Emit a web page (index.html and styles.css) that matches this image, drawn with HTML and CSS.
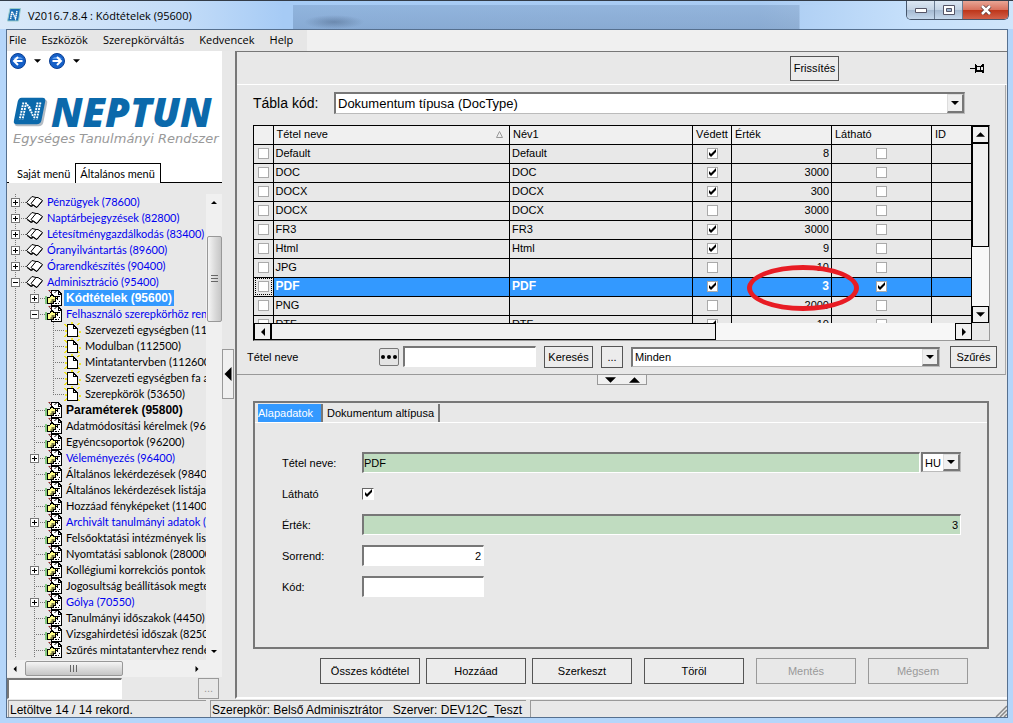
FILE: index.html
```
<!DOCTYPE html>
<html lang="hu">
<head>
    <meta charset="UTF-8">
    <title>V2016.7.8.4 : Kódtételek (95600)</title>
    <link rel="stylesheet" href="styles.css">
</head>
<body>
<svg class="symbols" aria-hidden="true">
    <symbol id="book" viewBox="0 0 17 16">
        <path d="M0.500 8.500L6 2.500L10 3.500L12 3.500L16.500 6.500L11 13.500L7.500 11L5 12Z" fill="#fff" stroke="#000"/>
        <path d="M10 3.500L5 9.500L7.500 11.500M1 9.500L5 12.500L7.500 11.500L10.500 13.500L16 7.500" fill="none" stroke="#000"/>
    </symbol>
    <symbol id="hand" viewBox="0 0 16 16">
        <path d="M5.500 0.500H12.500L15.500 3.500V15.500H5.500Z" fill="#fff" stroke="#000" shape-rendering="crispEdges"/>
        <path d="M12.500 0V4H16M12 6.500h2M11 9.500h1M13 11.500h1M9 13.500h2M12 13.500h1" fill="none" stroke="#000" shape-rendering="crispEdges"/>
        <path d="M1.500 7.500H4L6.500 4.500L8 6.500H11.500V8.500H9.500V11.500H8V13.500H2.500L1.500 12.500Z" fill="#ffff8c" stroke="#000" shape-rendering="crispEdges"/>
        <path d="M4 1.500L11 8.500M6 10h3M5 12h3M9 3L12 0" fill="none" stroke="#000"/>
        <path d="M0 6h1v8h-1z" fill="#18a818"/>
        <path d="M3 0h2v1h-2zM5 2h1v1h-1z" fill="#a02828"/>
    </symbol>
    <symbol id="page" viewBox="0 0 16 16" shape-rendering="crispEdges">
        <path d="M0 2l3 3M7 0v2M15 1l-2 2M0 9h2M14 10h2M0 15l3-3M15 15l-2-2" stroke="#f0e628" stroke-width="2"/>
        <path d="M2.500 2.500H8.500L12.500 6.500V14.500H2.500Z" fill="#fff" stroke="#000"/>
        <path d="M8.500 2.500V6.500H12.500" fill="none" stroke="#000"/>
    </symbol>
    <symbol id="plus" viewBox="0 0 9 9" shape-rendering="crispEdges">
        <path d="M0.500 0.500h8v8h-8z" fill="#fff" stroke="#777"/>
        <path d="M2 4.500h5M4.500 2v5" stroke="#000"/>
    </symbol>
    <symbol id="minus" viewBox="0 0 9 9" shape-rendering="crispEdges">
        <path d="M0.500 0.500h8v8h-8z" fill="#fff" stroke="#777"/>
        <path d="M2 4.500h5" stroke="#000"/>
    </symbol>
    <symbol id="down" viewBox="0 0 8 4"><path d="M0 0h8l-4 4z"/></symbol>
    <symbol id="up" viewBox="0 0 8 4"><path d="M0 4h8l-4-4z"/></symbol>
    <symbol id="left" viewBox="0 0 4 8"><path d="M4 0v8l-4-4z"/></symbol>
    <symbol id="right" viewBox="0 0 4 8"><path d="M0 0v8l4-4z"/></symbol>
</svg>

<div class="window">
    <header class="titlebar">
        <svg class="app-icon" viewBox="0 0 14 14">
            <path d="M3 0.500H13.500L11.500 13H0.500Z" fill="#1c6fb4" stroke="#9cc"/>
            <path d="M3.500 11L5 3.500L8.500 10.500L10 3" fill="none" stroke="#fff" stroke-width="1.500" stroke-dasharray="1.500 0.500"/>
        </svg>
        <h1 class="title">V2016.7.8.4 : Kódtételek (95600)</h1>
        <div class="window-buttons">
            <button class="win-btn" aria-label="Kis méret"><svg width="12" height="5"><path d="M0.500 0.500h11v4h-11z" fill="#fff" stroke="#556"/></svg></button>
            <button class="win-btn" aria-label="Teljes méret"><svg width="12" height="10"><path d="M0.500 0.500h11v9h-11z" fill="#fff" stroke="#556"/><path d="M3.500 3.500h5v3h-5z" fill="#9bb4d0" stroke="#556"/></svg></button>
            <button class="win-btn close" aria-label="Bezárás"><svg width="12" height="10"><path d="M2 1l8 8M10 1l-8 8" stroke="#533" stroke-width="4"/><path d="M2 1l8 8M10 1l-8 8" stroke="#fff" stroke-width="2.500"/></svg></button>
        </div>
    </header>

    <div class="client">
        <nav class="menubar">
            <a href="#">File</a>
            <a href="#">Eszközök</a>
            <a href="#">Szerepkörváltás</a>
            <a href="#">Kedvencek</a>
            <a href="#">Help</a>
        </nav>

        <div class="workspace">
            <aside class="sidebar">
                <div class="nav-buttons">
                    <button class="round" aria-label="Vissza"><svg viewBox="0 0 16 16"><circle cx="8" cy="8" r="7.500" fill="#1560c8" stroke="#0b3f94"/><path d="M3 6a5.500 4 0 0 1 10 0z" fill="#5b9bea"/><path d="M12.500 8H4.500M8 4L4 8L8 12" fill="none" stroke="#fff" stroke-width="2"/></svg></button>
                    <svg class="arrow"><use href="#down"/></svg>
                    <button class="round" aria-label="Előre"><svg viewBox="0 0 16 16"><circle cx="8" cy="8" r="7.500" fill="#1560c8" stroke="#0b3f94"/><path d="M3 6a5.500 4 0 0 1 10 0z" fill="#5b9bea"/><path d="M3.500 8H11.500M8 4L12 8L8 12" fill="none" stroke="#fff" stroke-width="2"/></svg></button>
                    <svg class="arrow"><use href="#down"/></svg>
                </div>
                <div class="logo">
                    <div class="logo-main">
                        <svg class="logo-icon" viewBox="0 0 38 32">
                            <path d="M10 3H33Q37 3 36 7L32 27Q31 31 27 31H5Q1 31 2 27L6 7Q7 3 10 3Z" fill="#b4bcc4"/>
                            <path d="M9 1H31Q35 1 34 5L30 25Q29 29 25 29H4Q0 29 1 25L5 5Q6 1 9 1Z" fill="#0b69ab"/>
                            <path d="M11 6L7 24M14 6L10 24M17 10L21 20M15 8L19 16M26 6L22 24M29 6L25 24" stroke="#fff" stroke-width="2" stroke-dasharray="2 1" fill="none"/>
                        </svg>
                        <span class="logo-name">NEPTUN</span>
                    </div>
                    <div class="logo-sub">Egységes Tanulmányi Rendszer</div>
                </div>
                <div class="side-tabs">
                    <button class="side-tab">Saját menü</button>
                    <button class="side-tab active">Általános menü</button>
                </div>
                <div class="tree-box">
                    <ul class="tree">
                        <li><i class="line"><svg class="box"><use href="#plus"/></svg></i><svg class="ico"><use href="#book"/></svg><a class="blue" href="#">Pénzügyek (78600)</a></li>
                        <li><i class="line"><svg class="box"><use href="#plus"/></svg></i><svg class="ico"><use href="#book"/></svg><a class="blue" href="#">Naptárbejegyzések (82800)</a></li>
                        <li><i class="line"><svg class="box"><use href="#plus"/></svg></i><svg class="ico"><use href="#book"/></svg><a class="blue" href="#">Létesítménygazdálkodás (83400)</a></li>
                        <li><i class="line"><svg class="box"><use href="#plus"/></svg></i><svg class="ico"><use href="#book"/></svg><a class="blue" href="#">Óranyilvántartás (89600)</a></li>
                        <li><i class="line"><svg class="box"><use href="#plus"/></svg></i><svg class="ico"><use href="#book"/></svg><a class="blue" href="#">Órarendkészítés (90400)</a></li>
                        <li><i class="line"><svg class="box"><use href="#minus"/></svg></i><svg class="ico"><use href="#book"/></svg><a class="blue" href="#">Adminisztráció (95400)</a></li>
                        <li><i class="pass"></i><i class="line"><svg class="box"><use href="#plus"/></svg></i><svg class="ico"><use href="#hand"/></svg><a class="selected" href="#">Kódtételek (95600)</a></li>
                        <li><i class="pass"></i><i class="line"><svg class="box"><use href="#minus"/></svg></i><svg class="ico"><use href="#hand"/></svg><a class="blue" href="#">Felhasználó szerepkörhöz ren</a></li>
                        <li><i class="pass"></i><i class="pass"></i><i class="line"></i><svg class="ico"><use href="#page"/></svg><a href="#">Szervezeti egységben (11</a></li>
                        <li><i class="pass"></i><i class="pass"></i><i class="line"></i><svg class="ico"><use href="#page"/></svg><a href="#">Modulban (112500)</a></li>
                        <li><i class="pass"></i><i class="pass"></i><i class="line"></i><svg class="ico"><use href="#page"/></svg><a href="#">Mintatantervben (112600)</a></li>
                        <li><i class="pass"></i><i class="pass"></i><i class="line"></i><svg class="ico"><use href="#page"/></svg><a href="#">Szervezeti egységben fa a</a></li>
                        <li><i class="pass"></i><i class="pass"></i><i class="line last"></i><svg class="ico"><use href="#page"/></svg><a href="#">Szerepkörök (53650)</a></li>
                        <li><i class="pass"></i><i class="line"></i><svg class="ico"><use href="#hand"/></svg><a class="bold" href="#">Paraméterek (95800)</a></li>
                        <li><i class="pass"></i><i class="line"></i><svg class="ico"><use href="#hand"/></svg><a href="#">Adatmódosítási kérelmek (960</a></li>
                        <li><i class="pass"></i><i class="line"></i><svg class="ico"><use href="#hand"/></svg><a href="#">Egyéncsoportok (96200)</a></li>
                        <li><i class="pass"></i><i class="line"><svg class="box"><use href="#plus"/></svg></i><svg class="ico"><use href="#hand"/></svg><a class="blue" href="#">Véleményezés (96400)</a></li>
                        <li><i class="pass"></i><i class="line"></i><svg class="ico"><use href="#hand"/></svg><a href="#">Általános lekérdezések (9840</a></li>
                        <li><i class="pass"></i><i class="line"></i><svg class="ico"><use href="#hand"/></svg><a href="#">Általános lekérdezések listája</a></li>
                        <li><i class="pass"></i><i class="line"></i><svg class="ico"><use href="#hand"/></svg><a href="#">Hozzáad fényképeket (11400</a></li>
                        <li><i class="pass"></i><i class="line"><svg class="box"><use href="#plus"/></svg></i><svg class="ico"><use href="#hand"/></svg><a class="blue" href="#">Archivált tanulmányi adatok (2</a></li>
                        <li><i class="pass"></i><i class="line"></i><svg class="ico"><use href="#hand"/></svg><a href="#">Felsőoktatási intézmények list</a></li>
                        <li><i class="pass"></i><i class="line"></i><svg class="ico"><use href="#hand"/></svg><a href="#">Nyomtatási sablonok (280000</a></li>
                        <li><i class="pass"></i><i class="line"><svg class="box"><use href="#plus"/></svg></i><svg class="ico"><use href="#hand"/></svg><a href="#">Kollégiumi korrekciós pontok e</a></li>
                        <li><i class="pass"></i><i class="line"></i><svg class="ico"><use href="#hand"/></svg><a href="#">Jogosultság beállítások megte</a></li>
                        <li><i class="pass"></i><i class="line"><svg class="box"><use href="#plus"/></svg></i><svg class="ico"><use href="#hand"/></svg><a class="blue" href="#">Gólya (70550)</a></li>
                        <li><i class="pass"></i><i class="line"></i><svg class="ico"><use href="#hand"/></svg><a href="#">Tanulmányi időszakok (4450)</a></li>
                        <li><i class="pass"></i><i class="line"></i><svg class="ico"><use href="#hand"/></svg><a href="#">Vizsgahirdetési időszak (8250</a></li>
                        <li><i class="pass"></i><i class="line"></i><svg class="ico"><use href="#hand"/></svg><a href="#">Szűrés mintatantervhez rende</a></li>
                    </ul>
                    <div class="vbar">
                        <svg class="tiny"><use href="#up"/></svg>
                        <div class="vthumb"><span class="grip"></span></div>
                        <svg class="tiny"><use href="#down"/></svg>
                    </div>
                </div>
                <div class="hbar">
                    <svg class="tiny-side"><use href="#left"/></svg>
                    <div class="hthumb"><span class="grip upright"></span></div>
                    <svg class="tiny-side"><use href="#right"/></svg>
                </div>
                <div class="side-search">
                    <input class="field" type="text" aria-label="Menü keresése">
                    <button class="btn small" disabled>...</button>
                </div>
            </aside>

            <div class="splitter">
                <button class="collapse" aria-label="Menü elrejtése"><svg><use href="#left"/></svg></button>
            </div>

            <main class="pane">
                <div class="pane-tools">
                    <button class="btn refresh">Frissítés</button>
                    <svg class="pin" viewBox="0 0 15 13" shape-rendering="crispEdges"><path d="M0 6.500H5M5.500 2V11M6.500 3V10M6 4.500H10M6 9.500H10M6 8.500H10M13.500 2V11M10.500 4V10M11 4.500L13 2.500M11 8.500L13 10.500M12.500 3V5M12.500 8V10" fill="none" stroke="#000"/></svg>
                </div>

                <section class="list">
                    <div class="code-row">
                        <label for="table-code">Tábla kód:</label>
                        <div class="combo">
                            <select id="table-code"><option>Dokumentum típusa (DocType)</option></select>
                            <span class="drop"><svg><use href="#down"/></svg></span>
                        </div>
                    </div>

                    <div class="grid">
                        <div class="grid-view">
                            <table>
                                <colgroup><col class="c-tick"><col><col class="c-name"><col class="c-lock"><col class="c-num"><col class="c-num"><col class="c-id"></colgroup>
                                <thead>
                                    <tr><th></th><th><span class="sorted">Tétel neve <svg width="7" height="7"><path d="M0.500 6.500h6l-3-6z" fill="none" stroke="#999"/></svg></span></th><th>Név1</th><th>Védett</th><th>Érték</th><th>Látható</th><th>ID</th></tr>
                                </thead>
                                <tbody>
                                    <tr><td><input type="checkbox" aria-label="Kijelöl"></td><td>Default</td><td>Default</td><td><input type="checkbox" aria-label="Védett" checked></td><td>8</td><td><input type="checkbox" aria-label="Látható"></td><td></td></tr>
                                    <tr><td><input type="checkbox" aria-label="Kijelöl"></td><td>DOC</td><td>DOC</td><td><input type="checkbox" aria-label="Védett" checked></td><td>3000</td><td><input type="checkbox" aria-label="Látható"></td><td></td></tr>
                                    <tr><td><input type="checkbox" aria-label="Kijelöl"></td><td>DOCX</td><td>DOCX</td><td><input type="checkbox" aria-label="Védett" checked></td><td>300</td><td><input type="checkbox" aria-label="Látható"></td><td></td></tr>
                                    <tr><td><input type="checkbox" aria-label="Kijelöl"></td><td>DOCX</td><td>DOCX</td><td><input type="checkbox" aria-label="Védett"></td><td>3000</td><td><input type="checkbox" aria-label="Látható"></td><td></td></tr>
                                    <tr><td><input type="checkbox" aria-label="Kijelöl"></td><td>FR3</td><td>FR3</td><td><input type="checkbox" aria-label="Védett" checked></td><td>3000</td><td><input type="checkbox" aria-label="Látható"></td><td></td></tr>
                                    <tr><td><input type="checkbox" aria-label="Kijelöl"></td><td>Html</td><td>Html</td><td><input type="checkbox" aria-label="Védett" checked></td><td>9</td><td><input type="checkbox" aria-label="Látható"></td><td></td></tr>
                                    <tr><td><input type="checkbox" aria-label="Kijelöl"></td><td>JPG</td><td></td><td><input type="checkbox" aria-label="Védett"></td><td>10</td><td><input type="checkbox" aria-label="Látható"></td><td></td></tr>
                                    <tr class="current"><td><input type="checkbox" aria-label="Kijelöl"></td><td>PDF</td><td>PDF</td><td><input type="checkbox" aria-label="Védett" checked></td><td><div class="marked">3<span class="ring"></span></div></td><td><input type="checkbox" aria-label="Látható" checked></td><td></td></tr>
                                    <tr><td><input type="checkbox" aria-label="Kijelöl"></td><td>PNG</td><td></td><td><input type="checkbox" aria-label="Védett"></td><td>2000</td><td><input type="checkbox" aria-label="Látható"></td><td></td></tr>
                                    <tr><td><input type="checkbox" aria-label="Kijelöl"></td><td>RTF</td><td>RTF</td><td><input type="checkbox" aria-label="Védett" checked></td><td>10</td><td><input type="checkbox" aria-label="Látható"></td><td></td></tr>
                                </tbody>
                            </table>
                        </div>
                        <div class="grid-vbar">
                            <span class="step"><svg class="arrow"><use href="#up"/></svg></span>
                            <span class="slider"></span>
                            <span class="step bottom"><svg class="arrow"><use href="#down"/></svg></span>
                        </div>
                        <div class="grid-hbar">
                            <span class="step"><svg class="arrow-side"><use href="#left"/></svg></span>
                            <span class="slider"></span>
                            <span class="step end"><svg class="arrow-side"><use href="#right"/></svg></span>
                        </div>
                    </div>

                    <div class="filter-row">
                        <label for="find">Tétel neve</label>
                        <button class="dots" aria-label="Mező választása"><svg width="16" height="4"><circle cx="2" cy="2" r="2"/><circle cx="8" cy="2" r="2"/><circle cx="14" cy="2" r="2"/></svg></button>
                        <input class="field" id="find" type="text">
                        <button class="btn search">Keresés</button>
                        <button class="btn more">...</button>
                        <div class="combo">
                            <select aria-label="Szűrő"><option>Minden</option></select>
                            <span class="drop"><svg><use href="#down"/></svg></span>
                        </div>
                        <button class="btn filter">Szűrés</button>
                    </div>
                </section>

                <div class="divider">
                    <button class="handle" aria-label="Panel méretezése"><svg><use href="#down"/></svg><svg><use href="#up"/></svg></button>
                </div>

                <section class="details">
                    <div class="tabs">
                        <button class="tab active">Alapadatok</button>
                        <button class="tab">Dokumentum altípusa</button>
                    </div>
                    <form class="form">
                        <label for="name">Tétel neve:</label>
                        <div class="pair">
                            <input class="field green" id="name" type="text" value="PDF">
                            <div class="combo lang">
                                <select aria-label="Nyelv"><option>HU</option></select>
                                <span class="drop"><svg><use href="#down"/></svg></span>
                            </div>
                        </div>
                        <label for="visible">Látható</label>
                        <input class="sunken" id="visible" type="checkbox" checked>
                        <label for="value">Érték:</label>
                        <input class="field green number" id="value" type="text" value="3">
                        <label for="order">Sorrend:</label>
                        <input class="field short number" id="order" type="text" value="2">
                        <label for="code">Kód:</label>
                        <input class="field short" id="code" type="text">
                    </form>
                </section>

                <div class="actions">
                    <div class="action-group">
                        <button class="btn">Összes kódtétel</button>
                        <button class="btn">Hozzáad</button>
                        <button class="btn">Szerkeszt</button>
                    </div>
                    <button class="btn">Töröl</button>
                    <button class="btn" disabled>Mentés</button>
                    <button class="btn" disabled>Mégsem</button>
                </div>
            </main>
        </div>

        <footer class="status">
            <span class="records">Letöltve 14 / 14 rekord.</span>
            <span class="server"><span>Szerepkör: Belső Adminisztrátor</span><span>Szerver: DEV12C_Teszt</span></span>
            <span class="rest"><svg width="12" height="12"><path d="M1 12L12 1M5 12L12 5M9 12L12 9" stroke="#888" stroke-width="1.500"/></svg></span>
        </footer>
    </div>
</div>
</body>
</html>
```

FILE: styles.css
```
* {
    box-sizing: border-box;
}
body {
    margin: 0;
    font-family: "Liberation Sans", Arial, sans-serif;
    font-size: 11px;
    color: #000;
}
button, input, select {
    font: inherit;
    color: inherit;
    padding: 0;
    margin: 0;
    border-radius: 0;
}
a {
    color: inherit;
    text-decoration: none;
}
svg {
    display: block;
    flex: none;
}
.symbols {
    position: absolute;
    width: 0;
    height: 0;
}

/* window frame */
.window {
    display: flex;
    flex-direction: column;
    height: 100vh;
    padding: 0 5px 5px 6px;
    background: #b5d6fa;
    border-top: 1px solid #333c48;
    overflow: hidden;
}
.titlebar {
    display: flex;
    align-items: center;
    flex: none;
    height: 28px;
    margin: 0 -5px 0 -6px;
    padding: 0 4px 0 7px;
    background:
        radial-gradient(closest-side, rgba(50, 70, 100, 0.35), transparent) 304px 14px / 60px 14px no-repeat,
        linear-gradient(rgba(60, 90, 130, 0.2), rgba(60, 90, 130, 0.3)) 293px 4px / 50% 100% no-repeat,
        linear-gradient(to right, #d9e9f9, #c3dcf8 18%, #a6cbf5 28%, #a9cbf2 75%, #c6e0fb 90%, #cfe5fb);
}
.app-icon {
    width: 14px;
    height: 14px;
    margin-right: 7px;
}
.title {
    margin: 0;
    font: 11px "Open Sans", sans-serif;
}
.window-buttons {
    display: flex;
    align-self: flex-start;
    margin-left: auto;
    border: 1px solid #46566b;
    border-top: 0;
    border-radius: 0 0 5px 5px;
    overflow: hidden;
}
.win-btn {
    display: flex;
    align-items: center;
    justify-content: center;
    width: 28px;
    height: 18px;
    border: 0;
    border-right: 1px solid #6b7c92;
    background: linear-gradient(#dce7f3, #c3d2e3 50%, #a4b9d0 50%, #c5d8ec);
}
.win-btn.close {
    width: 45px;
    border-right: 0;
    background: linear-gradient(#e8a595, #d8705c 50%, #bd3418 50%, #d2614a);
}
.client {
    display: flex;
    flex-direction: column;
    flex: 1;
    min-height: 0;
    border: 1px solid #56708f;
    background: #e8e8e8;
}
.menubar {
    display: flex;
    gap: 15px;
    flex: none;
    height: 21px;
    padding-left: 2px;
    background: linear-gradient(to right, #e6e6e6 30%, #f0f0f0 30%);
    font: 11px/20px "Open Sans", sans-serif;
}
.workspace {
    display: flex;
    flex: 1;
    min-height: 0;
}

/* left side */
.sidebar {
    display: flex;
    flex-direction: column;
    width: 215px;
    background: #fff;
}
.nav-buttons {
    display: flex;
    align-items: center;
    gap: 8px;
    height: 20px;
    padding-left: 3px;
}
.round {
    width: 16px;
    height: 16px;
    border: 0;
    background: none;
}
.arrow {
    width: 7px;
    height: 4px;
}
.arrow-side {
    width: 4px;
    height: 8px;
}
.logo {
    padding: 22px 0 0 6px;
    height: 92px;
}
.logo-main {
    display: flex;
    align-items: center;
    height: 38px;
}
.logo-icon {
    width: 36px;
    height: 32px;
}
.logo-name {
    margin-left: 2px;
    font: italic 800 40px/38px "Open Sans", sans-serif;
    color: #0b69ab;
}
.logo-sub {
    font: italic 13px/16px "DejaVu Sans", sans-serif;
    color: #999;
    white-space: nowrap;
}
.side-tabs {
    display: flex;
    height: 20px;
    padding-left: 2px;
    border-bottom: 1px solid #000;
    font-family: Lato, sans-serif;
}
.side-tab {
    height: 20px;
    padding: 0 5px 0 8px;
    border: 0;
    background: #fff;
}
.side-tab.active {
    padding: 0 5px 0 4px;
    border: 1px solid #000;
    border-bottom: 0;
}
.tree-box {
    display: flex;
    flex: 1;
    min-height: 0;
    padding-top: 11px;
    background: #e8e8e8;
}
.tree {
    flex: 1;
    min-width: 0;
    margin: 0;
    padding: 0;
    list-style: none;
    font-family: Lato, sans-serif;
    overflow: hidden;
}
.tree li {
    display: flex;
    height: 16px;
    line-height: 16px;
    white-space: nowrap;
}
.tree i {
    flex: none;
    width: 19px;
    height: 16px;
    padding: 4px;
}
.pass, .line {
    background: repeating-linear-gradient(to bottom, #777 0 1px, transparent 1px 2px) 8px 0 / 1px 100% no-repeat;
}
.line {
    background:
        repeating-linear-gradient(to bottom, #777 0 1px, transparent 1px 2px) 8px 0 / 1px 100% no-repeat,
        repeating-linear-gradient(to right, #777 0 1px, transparent 1px 2px) 8px 8px / 11px 1px no-repeat;
}
.line.last {
    background:
        repeating-linear-gradient(to bottom, #777 0 1px, transparent 1px 2px) 8px 0 / 1px 9px no-repeat,
        repeating-linear-gradient(to right, #777 0 1px, transparent 1px 2px) 8px 8px / 11px 1px no-repeat;
}
.box {
    width: 9px;
    height: 9px;
}
.ico {
    width: 17px;
    height: 16px;
    margin-right: 2px;
}
.tree a {
    padding-left: 2px;
}
.blue {
    color: #0000f0;
}
.bold, .selected {
    font-family: "Liberation Sans", Arial, sans-serif;
    font-size: 12px;
    font-weight: bold;
}
.tree .selected {
    padding-right: 2px;
    color: #fff;
    background: #3399ff;
}
.vbar {
    display: flex;
    flex-direction: column;
    align-items: center;
    width: 16px;
    padding: 7px 0;
    background: #f0f0f0;
}
.tiny {
    width: 6px;
    height: 3px;
}
.tiny-side {
    width: 4px;
    height: 6px;
}
.vthumb {
    display: flex;
    align-items: center;
    justify-content: center;
    width: 15px;
    height: 86px;
    margin: 32px 0 auto;
    border: 1px solid #989898;
    border-radius: 2px;
    background: linear-gradient(to right, #f5f5f5, #dcdcdc 50%, #c6c6c6);
}
.grip {
    width: 7px;
    height: 8px;
    background: repeating-linear-gradient(to bottom, #666 0 1px, transparent 1px 3px);
}
.grip.upright {
    width: 8px;
    height: 7px;
    background: repeating-linear-gradient(to right, #666 0 1px, transparent 1px 3px);
}
.hbar {
    display: flex;
    align-items: center;
    flex: none;
    height: 17px;
    padding: 0 23px 0 6px;
    background: #f0f0f0;
}
.hthumb {
    display: flex;
    align-items: center;
    justify-content: center;
    width: 98px;
    height: 15px;
    margin: 0 auto 0 8px;
    border: 1px solid #989898;
    border-radius: 2px;
    background: linear-gradient(#f5f5f5, #dcdcdc 50%, #c6c6c6);
}
.side-search {
    display: flex;
    align-items: center;
    justify-content: space-between;
    flex: none;
    height: 22px;
    padding-right: 3px;
    background: #e8e8e8;
}
.side-search .field {
    width: 115px;
}
.splitter {
    display: flex;
    align-items: flex-start;
    width: 13px;
    padding-top: 298px;
}
.collapse {
    display: flex;
    align-items: center;
    justify-content: center;
    width: 12px;
    height: 50px;
    border: 1px solid #999;
    background: #f0f0f0;
}
.collapse svg {
    width: 8px;
    height: 14px;
}

/* shared controls */
.btn {
    border: 1px solid #555;
    background: #ececec;
    text-align: center;
}
.btn:disabled {
    color: #999;
    border-color: #999;
    background: #e8e8e8;
}
.btn.small {
    width: 21px;
    height: 21px;
}
.field {
    height: 21px;
    border: 1px solid #fff;
    border-top: 2px solid #777;
    border-left: 2px solid #777;
    background: #fff;
}
.green {
    background: #c0dcc0;
}
.number {
    text-align: right;
    padding-right: 2px;
}
.combo {
    display: flex;
    height: 22px;
    border: 1px solid #bbb;
    border-top: 2px solid #777;
    border-left: 2px solid #777;
    background: #fff;
}
.combo select {
    appearance: none;
    flex: 1;
    min-width: 0;
    padding-left: 2px;
    border: 0;
    background: none;
}
.drop {
    display: flex;
    align-items: center;
    justify-content: center;
    width: 17px;
    border: 1px solid #ddd;
    border-right: 2px solid #777;
    border-bottom: 2px solid #777;
    background: #efefef;
}
.drop svg {
    width: 8px;
    height: 4px;
}
input[type="checkbox"] {
    appearance: none;
    display: block;
    width: 11px;
    height: 11px;
    border: 1px solid #aaa;
    background: #fff;
}
input[type="checkbox"]:checked {
    background: #fff url("data:image/svg+xml,%3Csvg xmlns='http://www.w3.org/2000/svg' width='9' height='9'%3E%3Cpath d='M1 3v3l2 2 5-5V0L3 5z'/%3E%3C/svg%3E") center no-repeat;
}

/* right side */
.pane {
    display: flex;
    flex-direction: column;
    flex: 1;
    min-width: 0;
    border-top: 1px solid #777;
    border-left: 2px solid #777;
    border-bottom: 2px solid #fff;
}
.pane-tools {
    display: flex;
    align-items: center;
    justify-content: flex-end;
    gap: 131px;
    flex: none;
    height: 33px;
    padding-right: 22px;
    border-bottom: 1px solid #fff;
}
.refresh {
    width: 49px;
    height: 25px;
}
.pin {
    width: 15px;
    height: 13px;
}
.list {
    flex: none;
    margin-right: 1px;
    border-right: 1px solid #aaa;
    border-bottom: 1px solid #999;
}
.code-row {
    display: flex;
    align-items: center;
    margin: 7px 40px 0 16px;
    font-size: 13px;
}
.code-row label {
    width: 81px;
    font-size: 14px;
}
.code-row .combo {
    flex: 1;
}
.grid {
    display: grid;
    grid-template-columns: 1fr 17px;
    margin: 11px 15px 0 16px;
    border: 1px solid #999;
    border-top-color: #000;
    border-left-color: #000;
}
.grid-view {
    height: 197px;
    overflow: hidden;
}
table {
    width: 100%;
    table-layout: fixed;
    border-collapse: collapse;
}
.c-tick {
    width: 19px;
}
.c-name {
    width: 183px;
}
.c-lock {
    width: 39px;
}
.c-num {
    width: 100px;
}
.c-id {
    width: 40px;
}
th, td {
    height: 19px;
    padding: 0 2px;
    border-right: 1px solid #000;
    border-bottom: 1px solid #000;
    line-height: 17px;
    text-align: left;
    white-space: nowrap;
}
th {
    height: 18px;
    padding: 0 3px;
    background: #f0f0f0;
    font-weight: normal;
}
.sorted {
    display: flex;
    align-items: center;
    justify-content: space-between;
    padding-right: 3px;
}
td input {
    margin: 0 auto !important;
}
td:nth-child(5) {
    text-align: right;
}
.current td {
    background: #3399ff;
    color: #fff;
    font-size: 12px;
    font-weight: bold;
}
.current td:first-child {
    background: #e8e8e8;
    outline: 1px dotted #000;
    outline-offset: -2px;
}
.marked {
    position: relative;
}
/* highlight ellipse round the value */
.ring {
    position: absolute;
    z-index: 1;
    right: -30px;
    top: -13px;
    width: 112px;
    height: 46px;
    border: 5px solid #e81c24;
    border-radius: 50%;
}
.grid-vbar {
    display: flex;
    flex-direction: column;
    background: #f7f7f7;
}
.step {
    display: flex;
    align-items: center;
    justify-content: center;
    width: 17px;
    height: 17px;
    border: 1px solid #000;
    background: #f0f0f0;
}
.grid-vbar .arrow {
    width: 9px;
    height: 5px;
}
.grid-vbar .slider {
    width: 17px;
    height: 104px;
    border: 1px solid #000;
    background: #f0f0f0;
}
.bottom {
    margin-top: auto;
}
.grid-hbar {
    display: flex;
    background: #f7f7f7;
}
.grid-hbar .slider {
    width: 62%;
    height: 17px;
    border: 1px solid #000;
    background: #f0f0f0;
}
.end {
    margin-left: auto;
}
.filter-row {
    display: flex;
    align-items: center;
    height: 33px;
    padding: 0 8px 2px 10px;
}
.filter-row label {
    width: 132px;
}
.dots {
    display: flex;
    align-items: center;
    justify-content: center;
    width: 20px;
    height: 18px;
    margin-right: 4px;
    border: 1px solid #777;
    border-radius: 2px;
    background: #e4e4e4;
}
.filter-row .field {
    width: 133px;
    margin-right: 8px;
}
.search {
    width: 49px;
    height: 22px;
}
.filter {
    width: 47px;
    height: 22px;
}
.more {
    width: 22px;
    height: 22px;
    margin: 0 8px;
}
.filter-row .combo {
    flex: 1;
    height: 20px;
    margin-right: 10px;
}
.divider {
    display: flex;
    justify-content: center;
    flex: none;
    height: 26px;
}
.handle {
    display: flex;
    align-items: center;
    justify-content: center;
    gap: 13px;
    width: 50px;
    height: 10px;
    border: 1px solid #999;
    border-top: 0;
    background: #f0f0f0;
}
.handle svg {
    width: 11px;
    height: 6px;
}
.details {
    display: flex;
    flex-direction: column;
    flex: 1;
    min-height: 0;
    margin: 0 18px 0 16px;
    border: 2px solid #777;
}
.tabs {
    display: flex;
    align-items: flex-end;
    height: 20px;
    padding: 0 0 0 3px;
    border-bottom: 1px solid #fff;
}
.tab {
    height: 18px;
    padding: 0 4px;
    border: 0;
    border-right: 2px solid #777;
    background: none;
}
.tab.active {
    padding: 0 8px 0 0;
    background: #3399ff;
    color: #fff;
}
.form {
    display: grid;
    grid-template-columns: 80px 1fr;
    grid-auto-rows: 21px;
    align-items: center;
    row-gap: 10px;
    padding: 29px 26px 0 27px;
}
.pair {
    display: flex;
    gap: 1px;
}
.pair .field {
    flex: 1;
    min-width: 0;
}
.lang {
    width: 40px;
    height: 20px;
}
.short {
    width: 122px;
}
.form .sunken {
    width: 12px;
    height: 12px;
    border: 1px solid #fff;
    border-top-color: #666;
    border-left-color: #666;
}
.actions {
    display: flex;
    justify-content: flex-end;
    gap: 12px;
    flex: none;
    padding: 9px 39px 13px 0;
}
.action-group {
    display: flex;
    gap: 6px;
}
.actions .btn {
    width: 100px;
    height: 26px;
}

/* status bar */
.status {
    display: flex;
    gap: 4px;
    flex: none;
    height: 18px;
    padding: 1px 0 0 1px;
    font-size: 12px;
    line-height: 18px;
}
.status > span {
    border-top: 1px solid #999;
    border-left: 1px solid #999;
}
.records {
    width: 198px;
    padding-left: 1px;
}
.server {
    display: flex;
    gap: 10px;
    padding: 0 4px 0 1px;
}
.rest {
    display: flex;
    align-items: flex-end;
    justify-content: flex-end;
    flex: 1;
}
```
